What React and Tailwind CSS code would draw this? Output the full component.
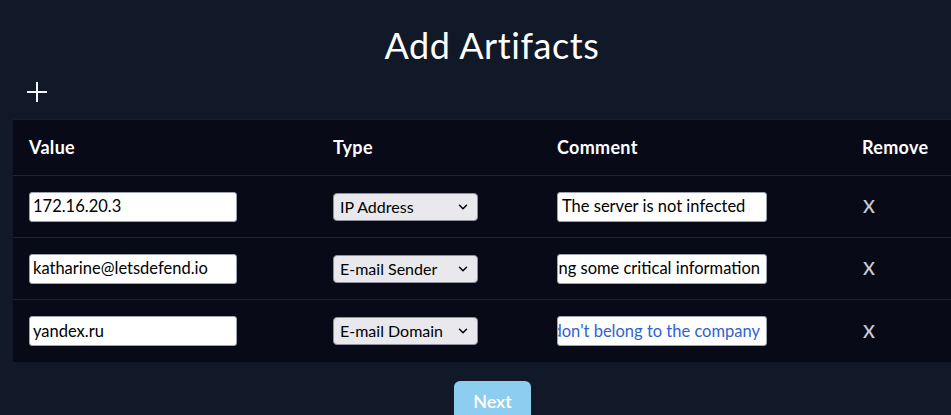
import { ChevronDown } from "lucide-react";

const rows = [
  { value: "172.16.20.3", type: "IP Address", comment: "The server is not infected", end: false },
  { value: "katharine@letsdefend.io", type: "E-mail Sender", comment: "The sender is sending some critical information", end: true },
  { value: "yandex.ru", type: "E-mail Domain", comment: "The domain don't belong to the company", end: true, blue: true },
];

const App = () => {
  return (
    <div className="w-[951px] h-[415px] overflow-hidden bg-[#111827] font-['Lato',sans-serif]">
      <div className="w-[984px]">
        <h1 className="pt-[22px] text-center text-[36px] leading-[46px] text-white tracking-[0.6px]">Add Artifacts</h1>

        <div className="pl-[26px] pt-[13px] h-[51px]">
          <svg width="22" height="22" viewBox="0 0 22 22">
            <path d="M11 1v20M1 11h20" stroke="#f3f4f6" strokeWidth="2" />
          </svg>
        </div>

        <div className="ml-[13px] w-[958px] bg-[#080a17] border-t border-[#1a1d2e]">
          <div className="flex h-[56px] items-center border-b border-[#1f2236] text-white font-bold text-[18px] tracking-[0.3px]">
            <div className="w-[320px] pl-[16px]">Value</div>
            <div className="w-[224px]">Type</div>
            <div className="w-[305px]">Comment</div>
            <div className="flex-1">Remove</div>
          </div>

          {rows.map((r, i) => (
            <div
              key={i}
              className={`flex items-center h-[62px] ${i < rows.length - 1 ? "border-b border-[#1f2236]" : ""}`}
            >
              <div className="w-[320px] pl-[16px]">
                <div className="w-[208px] h-[30px] bg-white rounded-[3px] border border-[#9ca3af] px-[3px] flex items-center text-[16.5px] text-black whitespace-nowrap overflow-hidden">
                  {r.value}
                </div>
              </div>
              <div className="w-[224px]">
                <div className="w-[145px] h-[28px] bg-[#e9e9ed] rounded-[4px] border border-[#8f8f9d] pl-[6px] pr-[7px] flex items-center justify-between gap-[4px] text-[16px] text-black whitespace-nowrap">
                  <span>{r.type}</span>
                  <ChevronDown size={14} strokeWidth={2.5} className="shrink-0" />
                </div>
              </div>
              <div className="w-[305px]">
                <div
                  className={`w-[210px] h-[30px] bg-white rounded-[3px] border border-[#9ca3af] px-[4px] flex items-center ${r.end ? "justify-end pr-[6px]" : ""} text-[16.5px] whitespace-nowrap overflow-hidden ${r.blue ? "text-[#2f62d0]" : "text-black"}`}
                >
                  <span className="shrink-0">{r.comment}</span>
                </div>
              </div>
              <div className="flex-1 pl-[1px] text-[#c8cad3] text-[18px] font-semibold">X</div>
            </div>
          ))}
        </div>

        <div className="flex justify-center pt-[19px] pl-[1px]">
          <button className="w-[77px] h-[40px] rounded-[6px] bg-[#8dcdf0] text-white text-[18px] font-semibold">
            Next
          </button>
        </div>
      </div>
    </div>
  );
};

export default App;
